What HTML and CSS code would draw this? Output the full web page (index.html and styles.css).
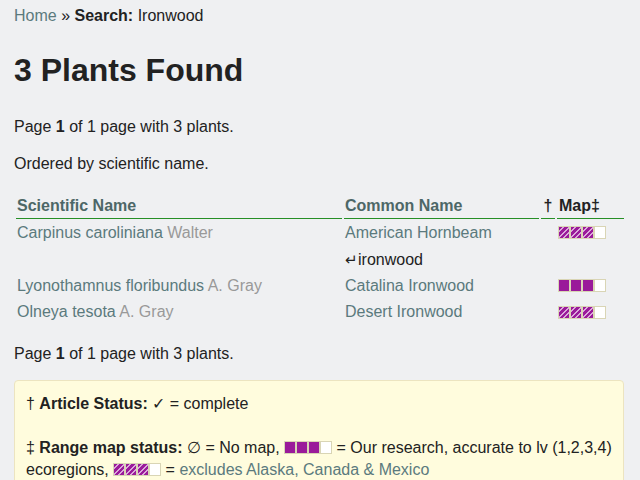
FILE: index.html
```html
<!DOCTYPE html>
<html lang="en">
<head>
<meta charset="utf-8">
<title>Search: Ironwood</title>
<link rel="stylesheet" href="styles.css">
</head>
<body>
<div class="page">
  <p class="crumbs"><a href="#">Home</a> » <b>Search:</b> Ironwood</p>
  <h1>3 Plants Found</h1>
  <p class="pager">Page <b>1</b> of 1 page with 3 plants.</p>
  <p class="order">Ordered by scientific name.</p>
  <table class="results">
    <thead>
      <tr>
        <th class="c-sci">Scientific Name</th>
        <th class="c-common">Common Name</th>
        <th class="c-status">†</th>
        <th class="c-map">Map‡</th>
      </tr>
    </thead>
    <tbody>
      <tr>
        <td><a href="#">Carpinus caroliniana</a> <span class="auth">Walter</span></td>
        <td><a href="#">American Hornbeam</a></td>
        <td></td>
        <td class="mapcell"><span class="map striped"><i></i><i></i><i></i><i class="empty"></i></span></td>
      </tr>
      <tr>
        <td></td>
        <td class="alias"><span class="hook">↵</span>ironwood</td>
        <td></td>
        <td></td>
      </tr>
      <tr>
        <td><a href="#">Lyonothamnus floribundus</a> <span class="auth">A. Gray</span></td>
        <td><a href="#">Catalina Ironwood</a></td>
        <td></td>
        <td class="mapcell"><span class="map"><i></i><i></i><i></i><i class="empty"></i></span></td>
      </tr>
      <tr>
        <td><a href="#">Olneya tesota</a> <span class="auth">A. Gray</span></td>
        <td><a href="#">Desert Ironwood</a></td>
        <td></td>
        <td class="mapcell"><span class="map striped"><i></i><i></i><i></i><i class="empty"></i></span></td>
      </tr>
    </tbody>
  </table>
  <p class="pager2">Page <b>1</b> of 1 page with 3 plants.</p>
  <div class="legend">
    † <b>Article Status:</b> ✓ = complete<br><br>
    ‡ <b>Range map status:</b> ∅ = No map, <span class="map"><i></i><i></i><i></i><i class="empty"></i></span> = Our research, accurate to lv (1,2,3,4) ecoregions, <span class="map striped"><i></i><i></i><i></i><i class="empty"></i></span> = <a href="#">excludes Alaska, Canada &amp; Mexico</a>
  </div>
</div>
</body>
</html>
```

FILE: styles.css
```css
html, body {
  margin: 0;
  padding: 0;
  background: #eff0f2;
}

body {
  font-family: "Liberation Sans", Arial, sans-serif;
  font-size: 16px;
  line-height: 1.4;
  color: #222;
}

.page {
  padding: 5px 14px 0;
}

a {
  color: #5b7a7d;
  text-decoration: none;
}

p {
  margin: 0;
}

h1 {
  margin: 24px 0 27px;
  font-size: 32px;
  line-height: 38px;
  font-weight: bold;
  color: #222;
}

.order {
  margin-top: 14px;
}

.results {
  width: 100%;
  margin-top: 16.6px;
  border-collapse: separate;
  border-spacing: 2px;
}

.results th,
.results td {
  padding: 1px;
  text-align: left;
  vertical-align: middle;
}

.results th {
  font-weight: bold;
  color: #4d6767;
  border-bottom: 1px solid #268f26;
}

.results th.c-status,
.results th.c-map {
  color: #222;
}

.c-sci { width: 324px; }
.c-common { width: 193px; }
.c-status { width: 12px; }
.c-map { width: 64px; }

.results th.c-status {
  text-align: center;
}

.results th.c-map {
  padding-left: 2px;
}

.auth {
  color: #999;
}

.alias {
  color: #222;
}

.hook {
  font-size: 15px;
}

.map {
  display: inline-flex;
  vertical-align: middle;
  position: relative;
  top: -1px;
}

.map i {
  display: block;
  width: 10px;
  height: 11px;
  border: 1px solid #d9d5b5;
  background: #9a1a9a;
}

.map.striped i {
  background: repeating-linear-gradient(135deg, #9a1a9a 0, #9a1a9a 2.4px, #dca8dc 2.4px, #dca8dc 4px);
}

.map i.empty,
.map.striped i.empty {
  background: #fff;
}

.pager2 {
  margin-top: 16px;
}

.legend {
  margin: 15px 2px 0 0;
  padding: 12px 10px 12px 11px;
  background: #fffcdd;
  border: 1px solid #ece4c0;
  border-radius: 4px;
  line-height: 22px;
}
```
